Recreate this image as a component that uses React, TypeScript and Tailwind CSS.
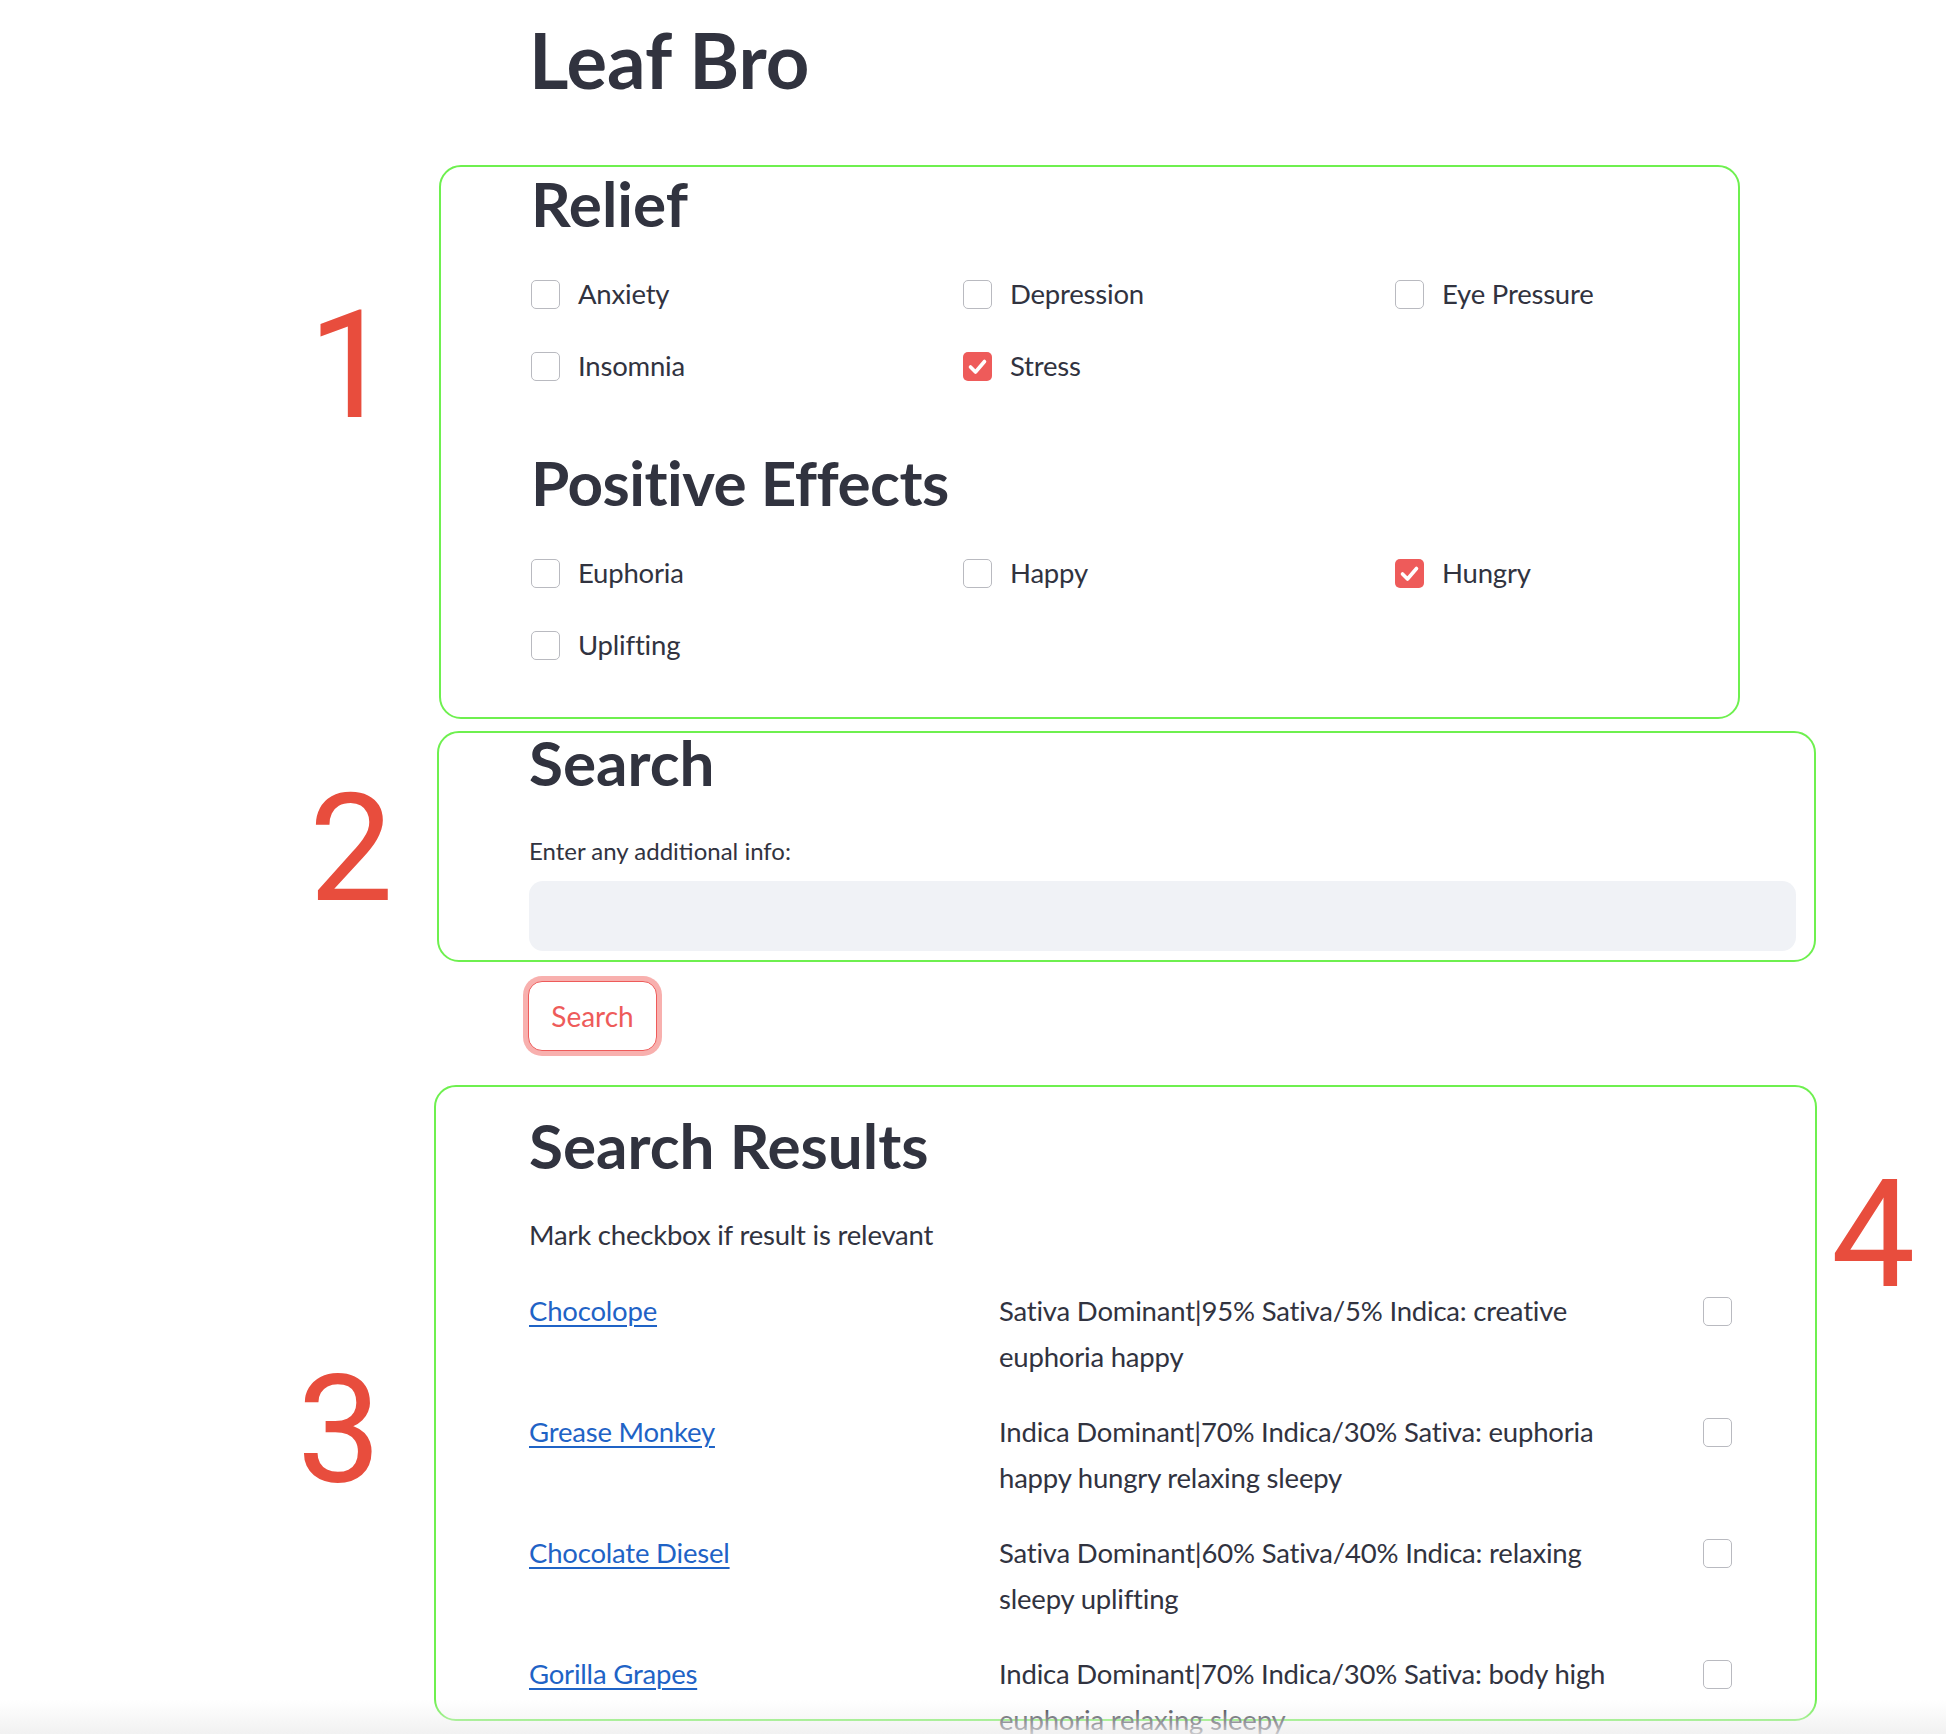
import React from 'react';

const FONT = "font-['Lato','Noto_Sans',sans-serif]";

const Box = ({ checked }: { checked?: boolean }) =>
  checked ? (
    <span className="flex h-[29px] w-[29px] shrink-0 items-center justify-center rounded-[5px] bg-[#ee5b5a]">
      <svg width="29" height="29" viewBox="0 0 29 29">
        <polyline points="7.5,15 12.5,20 21.5,9.5" fill="none" stroke="#fff" strokeWidth="3.6" strokeLinecap="round" strokeLinejoin="round" />
      </svg>
    </span>
  ) : (
    <span className="block h-[29px] w-[29px] shrink-0 rounded-[5px] border border-[#b9bac0] bg-white" />
  );

const Option = ({ label, checked }: { label: string; checked?: boolean }) => (
  <div className="flex h-[72px] items-center gap-[18px]">
    <Box checked={checked} />
    <span className="text-[27.5px] leading-[46px] tracking-[-0.2px]">{label}</span>
  </div>
);

const results = [
  { name: 'Chocolope', desc: ['Sativa Dominant|95% Sativa/5% Indica: creative', 'euphoria happy'] },
  { name: 'Grease Monkey', desc: ['Indica Dominant|70% Indica/30% Sativa: euphoria', 'happy hungry relaxing sleepy'] },
  { name: 'Chocolate Diesel', desc: ['Sativa Dominant|60% Sativa/40% Indica: relaxing', 'sleepy uplifting'] },
  { name: 'Gorilla Grapes', desc: ['Indica Dominant|70% Indica/30% Sativa: body high', 'euphoria relaxing sleepy'] },
];

const Num = ({ n, className }: { n: string; className: string }) => (
  <span className={`absolute font-['Roboto',Arial,sans-serif] text-[150px] leading-none text-[#e84d3d] ${className}`}>{n}</span>
);

export default function App() {
  return (
    <div className={`relative h-[1734px] w-full overflow-hidden bg-white text-[#31333f] ${FONT}`}>
      <h1 className="pl-[529px] pt-[14px] text-[76px] font-bold leading-[91px]">Leaf Bro</h1>

      {/* relief + effects */}
      <section className="ml-[439px] mt-[60px] box-border h-[554px] w-[1301px] rounded-[22px] border-2 border-[#6ef04f] pl-[90px]">
        <h2 className="-mt-[1px] text-[62px] font-bold leading-[74px]">Relief</h2>
        <div className="mt-[18px] grid grid-cols-[432px_432px_432px]">
          <Option label="Anxiety" />
          <Option label="Depression" />
          <Option label="Eye Pressure" />
          <Option label="Insomnia" />
          <Option label="Stress" checked />
        </div>
        <h2 className="mt-[43px] text-[62px] font-bold leading-[74px] tracking-[-0.5px]">Positive Effects</h2>
        <div className="mt-[18px] grid grid-cols-[432px_432px_432px]">
          <Option label="Euphoria" />
          <Option label="Happy" />
          <Option label="Hungry" checked />
          <Option label="Uplifting" />
        </div>
      </section>

      {/* search */}
      <section className="ml-[437px] mt-[12px] box-border h-[231px] w-[1379px] rounded-[22px] border-2 border-[#6ef04f] pl-[90px] pr-[18px]">
        <h2 className="-mt-[8px] text-[62px] font-bold leading-[74px]">Search</h2>
        <p className="mt-[34px] text-[24px] leading-[36px]">Enter any additional info:</p>
        <input className="mt-[12px] block h-[70px] w-full rounded-[14px] bg-[#f0f2f6] px-4 text-[28px] outline-none" />
      </section>

      <button className="ml-[528px] mt-[19px] box-border flex h-[70px] w-[129px] items-center justify-center rounded-[14px] border-[1.5px] border-[#ee5b5a] bg-white text-[28px] text-[#ee5b5a] shadow-[0_0_0_5px_#f8b0ae]">
        Search
      </button>

      {/* results */}
      <section className="ml-[434px] mt-[34px] box-border h-[636px] w-[1383px] rounded-[22px] border-2 border-[#6ef04f] pl-[93px]">
        <h2 className="mt-[21px] text-[62px] font-bold leading-[74px]">Search Results</h2>
        <p className="mt-[30px] text-[27.5px] leading-[46px] tracking-[-0.2px]">Mark checkbox if result is relevant</p>
        <div className="mt-[30px] flex flex-col gap-[29px]">
          {results.map((r) => (
            <div key={r.name} className="grid grid-cols-[470px_704px_29px] text-[27.5px] leading-[46px] tracking-[-0.2px]">
              <a href="#" className="self-start text-[#1f63c6] underline decoration-[1.5px] underline-offset-[4px]">{r.name}</a>
              <div>
                {r.desc.map((l) => (
                  <div key={l} className="whitespace-nowrap">{l}</div>
                ))}
              </div>
              <div className="mt-[9px]"><Box /></div>
            </div>
          ))}
        </div>
      </section>

      <div className="pointer-events-none absolute bottom-0 left-0 h-[34px] w-full bg-gradient-to-b from-white/0 to-[#eeeeee]/80" />

      <Num n="1" className="left-[308px] top-[291px]" />
      <Num n="2" className="left-[309px] top-[774px]" />
      <Num n="3" className="left-[297px] top-[1356px]" />
      <Num n="4" className="left-[1831px] top-[1160px]" />
    </div>
  );
}
